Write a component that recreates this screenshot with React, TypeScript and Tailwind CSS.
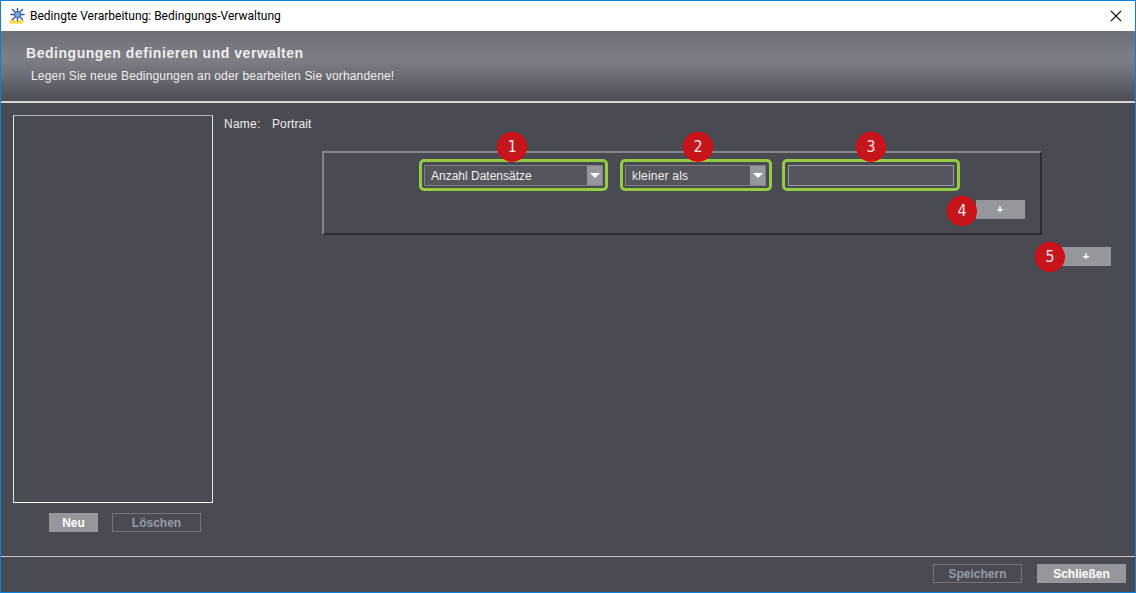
import React from "react";

const font = { fontFamily: '"Liberation Sans", Arial, sans-serif' };

function Badge({ n, className }: { n: number; className: string }) {
  return (
    <div
      className={`absolute flex h-[30px] w-[30px] items-center justify-center rounded-full border-2 border-[#e0090f] bg-[#c4161c] text-[15px] font-normal text-[#f6e4e4] ${className}`}
      style={{ fontFamily: '"DejaVu Sans Mono", monospace' }}
    >
      {n}
    </div>
  );
}

function Select({ label, className, textClass = "" }: { label: string; className: string; textClass?: string }) {
  return (
    <div className={`flex h-[21px] items-stretch border border-[#7f8087] bg-[#55555d] ${className}`}>
      <div className={`flex-1 pl-[6px] pt-[1px] text-[12px] leading-[19px] text-[#f0f0f2] ${textClass}`}>{label}</div>
      <div className="flex w-[15px] items-center justify-center bg-[#96979c]">
        <div className="h-0 w-0 border-x-[5px] border-t-[5px] border-x-transparent border-t-white" />
      </div>
    </div>
  );
}

function Plus() {
  return (
    <div className="flex h-[19px] w-[49px] items-center justify-center bg-[#96979c] pr-[1px] text-[11px] font-bold text-white">
      +
    </div>
  );
}

function Btn({ label, on, className = "" }: { label: string; on?: boolean; className?: string }) {
  return on ? (
    <div className={`flex h-[19px] items-center justify-center bg-[#96979c] text-[12px] font-bold text-white ${className}`}>
      {label}
    </div>
  ) : (
    <div className={`flex h-[19px] items-center justify-center border border-[#74757c] text-[12px] font-bold text-[#959ca8] ${className}`}>
      {label}
    </div>
  );
}

function AppIcon() {
  return (
    <svg width="16" height="16" viewBox="0 0 16 16" className="shrink-0">
      <path d="M0.5 11.5h4l1 1h9l0.5 0.5 -2 2.5H1z" fill="#f6d332" />
      <path d="M2 13h2v1H2zM6 13h2v1H6z" fill="#fff6b0" />
      <g stroke="#2d4f9c" strokeWidth="1.4" strokeLinecap="round">
        <path d="M8.5 0.5v12M2 6.5h13M3.5 1.5l10 10M13.5 1.5l-10 10" />
      </g>
      <circle cx="8.5" cy="6.5" r="3" fill="#7fa6dc" stroke="#24438c" strokeWidth="0.8" />
    </svg>
  );
}

export default function App() {
  return (
    <div
      className="flex h-[593px] w-[1136px] flex-col overflow-hidden border border-[#0f7fd8] bg-[#4a4a52]"
      style={font}
    >
      <div className="flex h-[30px] shrink-0 items-center bg-white pl-[8px] pr-[13px]">
        <AppIcon />
        <span
          className="ml-[5px] text-[12px] text-black"
          style={{ fontFamily: 'Roboto, sans-serif' }}
        >
          Bedingte Verarbeitung: Bedingungs-Verwaltung
        </span>
        <svg width="12" height="12" viewBox="0 0 12 12" className="ml-auto">
          <path d="M1 1l10 10M11 1L1 11" stroke="#111" strokeWidth="1.1" />
        </svg>
      </div>

      <div className="h-[70px] shrink-0 bg-[linear-gradient(to_bottom,#6f7077_0%,#7d7e86_40%,#6c6d74_65%,#4c4c54_100%)] pl-[25px] pt-[14px]">
        <div className="text-[14px] font-bold leading-[16px] tracking-[0.54px] text-[#eeeeef]">
          Bedingungen definieren und verwalten
        </div>
        <div className="ml-[5px] mt-[8px] text-[12px] leading-[14px] tracking-[0.17px] text-[#eeeeef]">
          Legen Sie neue Bedingungen an oder bearbeiten Sie vorhandene!
        </div>
      </div>
      <div className="h-[2px] shrink-0 bg-[#d4d4d6]" />

      <div className="flex min-h-0 flex-1">
        <div className="ml-[12px] mt-[12px] w-[200px] shrink-0">
          <div className="h-[388px] border border-[#e6e6e8] border-b-white border-t-[#b4b4b8]" />
          <div className="ml-[36px] mt-[10px] flex gap-[14px]">
            <Btn label="Neu" on className="w-[49px]" />
            <Btn label="Löschen" className="w-[89px]" />
          </div>
        </div>

        <div className="ml-[11px] flex-1 pt-[14px]">
          <div className="flex text-[12px] leading-[14px] tracking-[0.25px] text-[#eeeeef]">
            <span className="w-[48px]">Name:</span>
            <span className="tracking-[0.1px]">Portrait</span>
          </div>

          <div className="ml-[98px] mt-[20px] h-[84px] w-[720px] border-2 border-b-[#2c2c31] border-l-[#85858c] border-r-[#2c2c31] border-t-[#85858c]">
            <div className="ml-[95px] mt-[6px] flex gap-[12px]">
              <div className="relative flex h-[32px] w-[189px] items-center rounded-[5px] border-[3px] border-[#92cc41] pl-[2px]">
                <Select label="Anzahl Datensätze" className="w-[179px]" />
                <Badge n={1} className="left-[75px] top-[-30px]" />
              </div>
              <div className="relative flex h-[32px] w-[152px] items-center rounded-[5px] border-[3px] border-[#92cc41] pl-[2px]">
                <Select label="kleiner als" className="w-[141px]" textClass="tracking-[0.2px]" />
                <Badge n={2} className="left-[60px] top-[-30px]" />
              </div>
              <div className="relative ml-[-2px] flex h-[32px] w-[178px] items-center rounded-[5px] border-[3px] border-[#92cc41] pl-[3px]">
                <div className="h-[21px] w-[166px] border border-[#9a9ba1] bg-[#55555d]" />
                <Badge n={3} className="left-[71px] top-[-30px]" />
              </div>
            </div>
            <div className="mr-[15px] mt-[9px] flex justify-end">
              <div className="relative">
                <Plus />
                <Badge n={4} className="left-[-29px] top-[-4px]" />
              </div>
            </div>
          </div>

          <div className="mr-[24px] mt-[12px] flex justify-end">
            <div className="relative">
              <Plus />
              <Badge n={5} className="left-[-27px] top-[-5px]" />
            </div>
          </div>
        </div>
      </div>

      <div className="h-[36px] shrink-0 border-t border-[#c8c8ca] pr-[9px] pt-[7px]">
        <div className="flex justify-end gap-[15px]">
          <Btn label="Speichern" className="w-[89px]" />
          <Btn label="Schließen" on className="w-[89px]" />
        </div>
      </div>
    </div>
  );
}
